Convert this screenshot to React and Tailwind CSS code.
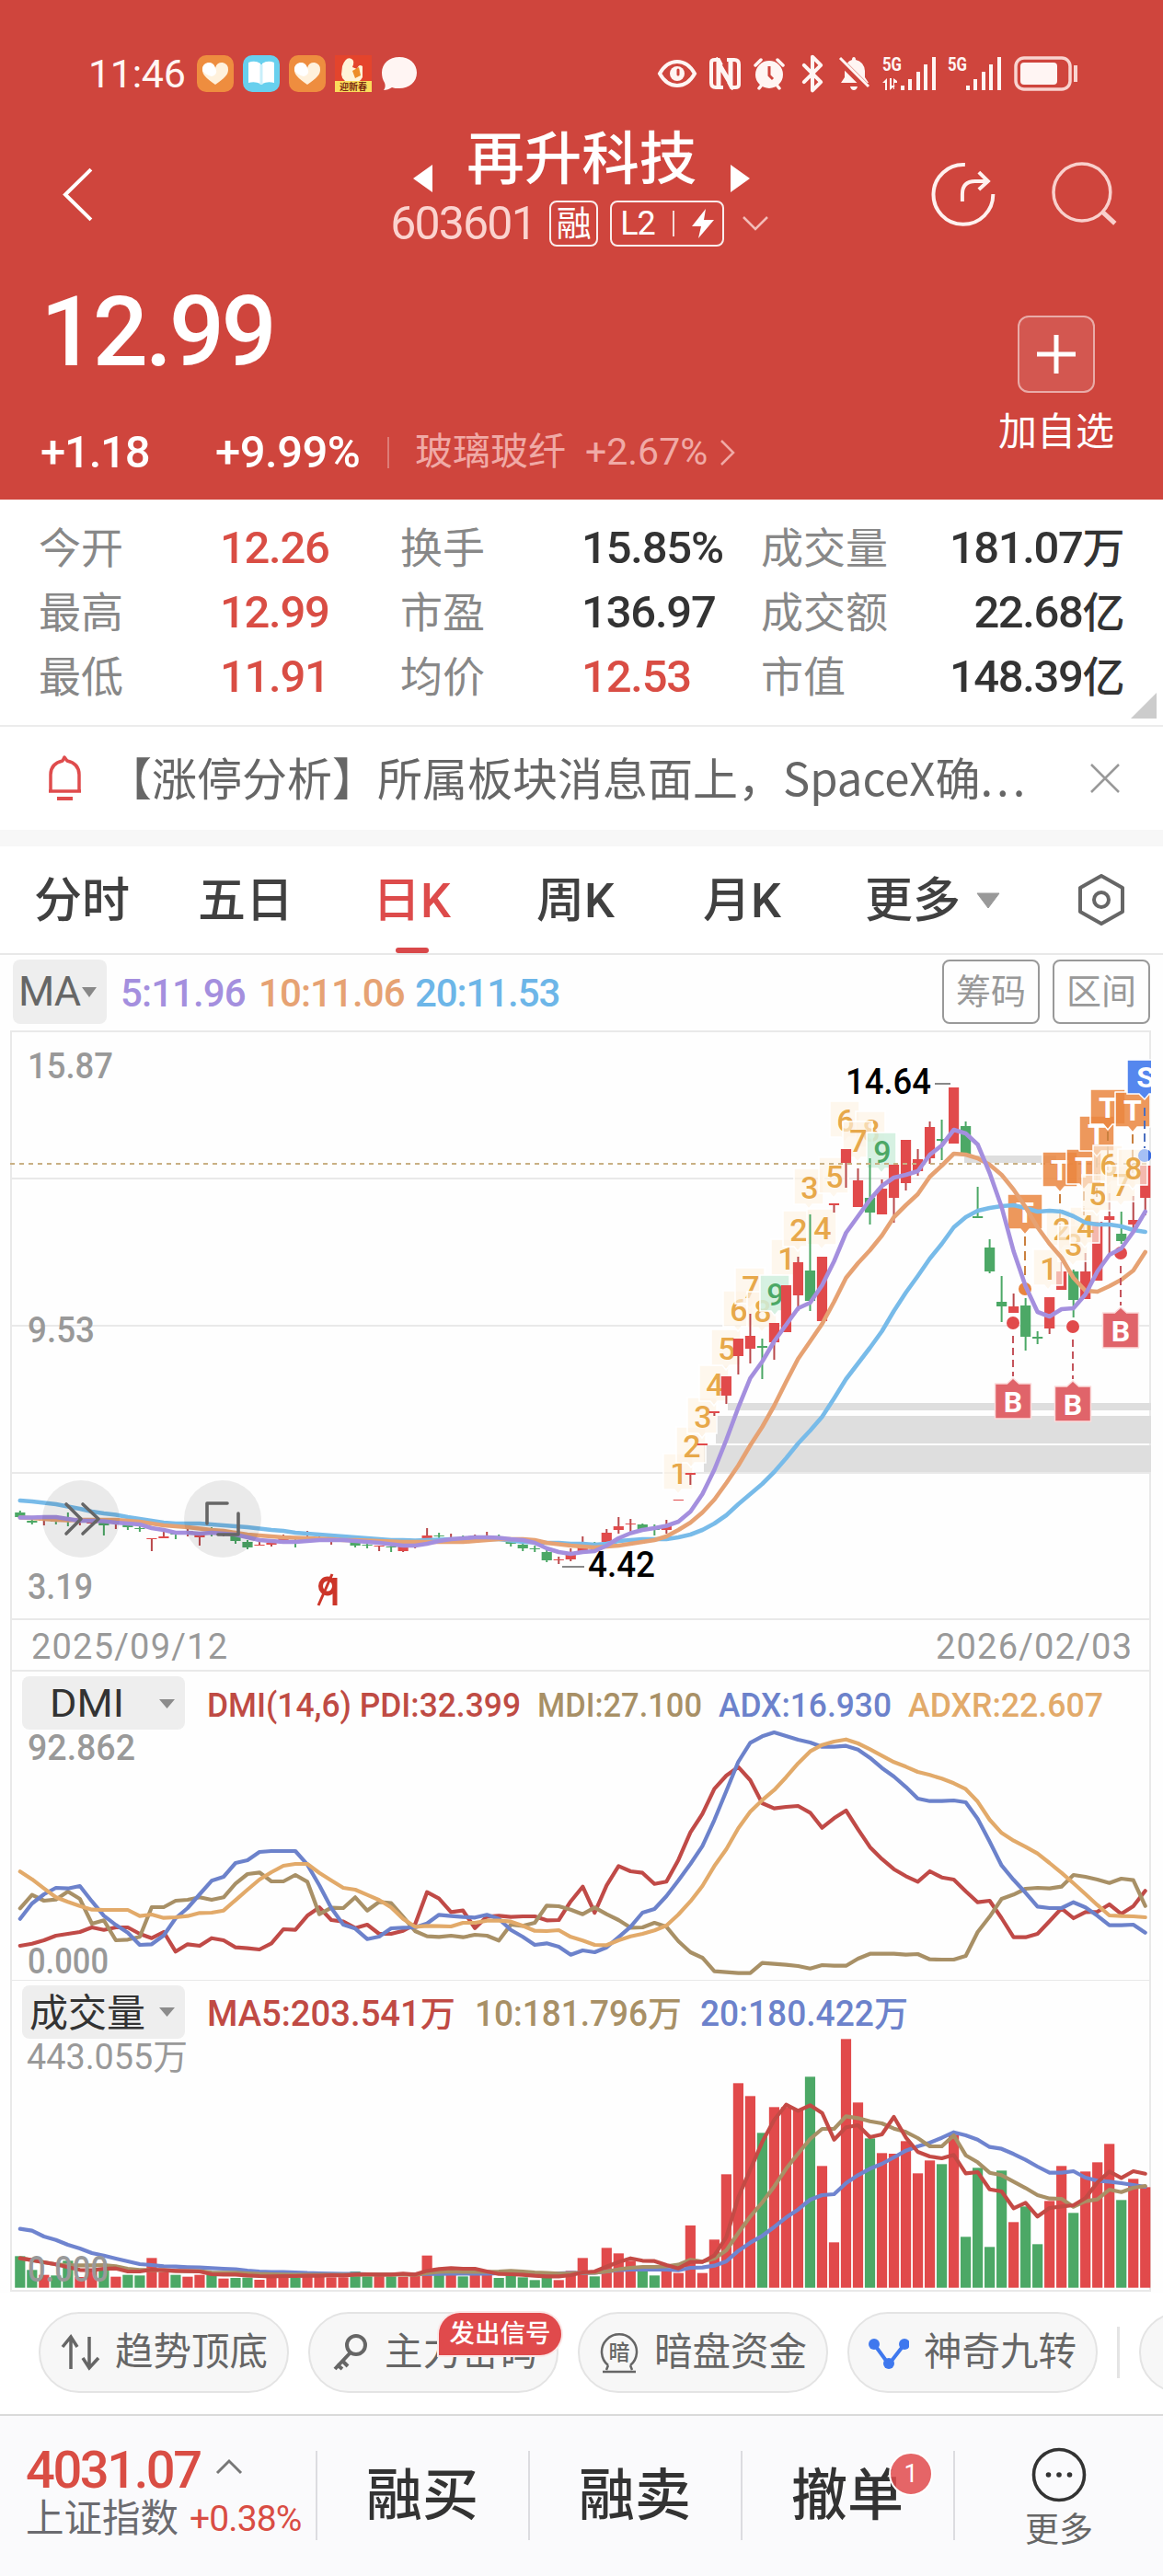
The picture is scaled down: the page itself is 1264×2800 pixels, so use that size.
import React from 'react';
import { Bluetooth } from 'lucide-react';

// ── Chart data ────────────────────────────────────────────────────────────────
const STEP = 13.01;
const px = i => 21.8 + i * STEP;

// [color, body top, body bottom, high, low]
const CANDLES = [
  ['g', 524, 529, 522, 531], ['g', 533, 535, 530, 537], ['r', 531, 533, 530, 538], ['g', 532, 534, 530, 537],
  ['g', 531, 533, 524, 539], ['r', 532, 534, 530, 538], ['r', 534, 536, 532, 539], ['g', 534, 538, 532, 549],
  ['r', 534, 536, 532, 542], ['g', 536, 540, 534, 543], ['g', 541, 542, 538, 545], ['r', 552, 553, 552, 566],
  ['r', 550, 552, 545, 552], ['g', 547, 548, 545, 553], ['r', 544, 546, 540, 550], ['r', 548, 551, 545, 560],
  ['g', 545, 547, 540, 550], ['r', 546, 549, 544, 550], ['g', 549, 555, 547, 558], ['g', 556, 562, 554, 564],
  ['r', 559, 560, 556, 560], ['r', 557, 559, 554, 561], ['r', 552, 554, 548, 557], ['g', 554, 556, 552, 562],
  ['r', 552, 554, 544, 556], ['r', 553, 554, 549, 556], ['r', 554, 555, 552, 559], ['r', 552, 554, 551, 556],
  ['g', 556, 560, 554, 562], ['g', 559, 560, 557, 563], ['r', 560, 561, 560, 566], ['g', 561, 562, 558, 567],
  ['r', 561, 566, 559, 567], ['r', 558, 560, 556, 563], ['r', 549, 555, 541, 559], ['g', 549, 550, 546, 554],
  ['r', 551, 553, 547, 554], ['g', 551, 553, 549, 555], ['r', 550, 552, 548, 554], ['r', 550, 552, 545, 553],
  ['g', 550, 552, 548, 555], ['g', 556, 558, 553, 561], ['g', 559, 563, 557, 566], ['g', 563, 564, 560, 567],
  ['g', 567, 576, 565, 578], ['r', 575, 576, 572, 580], ['r', 568, 575, 563, 577], ['r', 560, 566, 550, 568],
  ['g', 559, 561, 556, 564], ['r', 546, 556, 542, 557], ['r', 539, 543, 529, 547], ['r', 536, 537, 531, 545],
  ['g', 537, 542, 536, 543], ['g', 542, 543, 537, 549], ['r', 539, 543, 532, 547], ['r', 510, 511, 510, 511],
  ['r', 481, 483, 481, 494], ['r', 449, 451, 449, 451], ['r', 414, 416, 414, 419], ['r', 376, 397, 376, 406],
  ['r', 335, 354, 335, 374], ['r', 332, 346, 308, 362], ['g', 343, 345, 335, 379], ['r', 318, 339, 318, 358],
  ['r', 277, 328, 277, 328], ['r', 252, 288, 246, 305], ['g', 261, 294, 200, 305], ['r', 246, 316, 246, 316],
  ['r', 188, 190, 188, 198], ['r', 129, 144, 129, 171], ['r', 163, 192, 150, 192], ['g', 182, 198, 139, 211],
  ['r', 172, 200, 162, 200], ['r', 146, 182, 146, 209], ['r', 119, 166, 119, 174], ['r', 140, 153, 129, 158],
  ['r', 105, 139, 99, 145], ['g', 118, 120, 97, 141], ['r', 62, 123, 62, 123], ['g', 104, 135, 99, 135],
  ['g', 202, 204, 170, 204], ['g', 236, 262, 227, 264], ['g', 295, 300, 267, 317], ['r', 300, 307, 286, 307],
  ['g', 299, 333, 291, 348], ['g', 333, 335, 327, 341], ['r', 290, 324, 290, 330], ['r', 262, 282, 243, 282],
  ['g', 262, 293, 260, 312], ['r', 262, 292, 242, 292], ['r', 208, 272, 208, 272], ['r', 202, 206, 177, 244],
  ['g', 221, 229, 197, 232], ['r', 206, 211, 180, 220], ['r', 147, 182, 147, 201],
];

const MA5 = [
  529.5, 529.5, 529, 529, 531, 533, 533, 533.5, 535, 536, 537, 541, 543, 546, 546, 547, 546, 547, 548, 551,
  554, 555, 556, 556, 555, 554, 554, 554, 555, 556, 557, 558.5, 560, 560, 558, 555, 553, 552, 551, 551,
  551.5, 553, 554, 557, 563, 567, 569, 567, 566, 560, 552, 546.5, 543, 541, 538.5, 534, 523, 504, 477.5, 445,
  410, 378, 360, 338, 320, 302, 296, 277, 251, 220, 202, 184, 169, 160, 157, 153, 135, 125, 108, 112,
  124, 155, 192, 240, 278, 306, 311, 303, 302, 287, 262, 244, 237, 219, 197,
];
const MA10 = [
  529.5, 530, 531, 532, 532.5, 532, 532, 532, 532, 533, 534, 536, 538, 539, 540, 541.5, 543, 544, 546, 548,
  549, 550, 551, 551.5, 552, 552.5, 553, 554, 554, 554.5, 555, 555.5, 556, 556, 556, 556, 556, 556, 555, 554,
  553, 553, 553, 554, 557, 558.5, 560, 561, 562, 561, 560, 558, 556, 554, 550, 543, 535, 524, 510, 492,
  473, 451, 431, 408, 382, 357, 338, 319, 295, 269, 253, 239, 223, 203, 190, 178, 159, 147, 134, 135,
  139, 146, 157, 173, 192, 214, 232, 247, 269, 283, 284, 278, 271, 261, 241,
];
const MA20 = [
  511, 512, 513.5, 515, 517.5, 520, 523, 525, 526.5, 529, 531, 533, 535, 536, 536, 536, 537, 538, 539, 540,
  541.5, 543, 544, 546, 547, 548, 549, 550, 551, 552, 553, 554, 554, 554.5, 554, 553.5, 553, 553, 553, 553,
  553, 554.5, 556, 556.5, 557, 557, 558, 558, 559, 558, 555, 554, 553, 553, 553, 551, 548, 543, 536, 527,
  515, 504, 493, 480, 465, 449, 435, 420, 400, 379, 362, 345, 327, 305, 285, 267, 248, 232, 214, 203,
  196, 193, 191, 190, 193, 197, 196, 197, 202, 209, 211, 211, 213, 217, 219,
];

// The lower panels keep their samples in thirds of a pixel
const PDI = [
  945, 938, 927, 912, 906, 900, 885, 893, 885, 885, 906, 920, 900, 964, 940, 945, 920, 927, 950, 953,
  957, 937, 891, 893, 847, 820, 861, 866, 887, 876, 906, 906, 896, 875, 770, 791, 835, 830, 887, 850,
  847, 851, 849, 849, 862, 861, 800, 752, 837, 748, 685, 702, 707, 743, 736, 665, 575, 515, 433, 390,
  362, 405, 480, 497, 492, 489, 511, 560, 529, 504, 565, 623, 662, 695, 718, 736, 702, 722, 729, 767,
  803, 798, 855, 917, 917, 906, 865, 823, 855, 835, 834, 810, 841, 816, 766,
];
const MDI = [
  823, 779, 798, 794, 768, 792, 873, 862, 927, 925, 916, 819, 819, 798, 795, 787, 795, 787, 742, 711,
  706, 735, 735, 714, 736, 842, 821, 822, 787, 830, 802, 806, 850, 897, 914, 916, 912, 917, 909, 912,
  928, 876, 880, 870, 814, 816, 827, 842, 820, 842, 861, 886, 885, 870, 883, 930, 966, 984, 1028, 1031,
  1034, 1034, 1001, 1004, 1007, 1011, 1019, 1008, 1010, 1010, 987, 971, 971, 971, 974, 972, 989, 990, 990, 978,
  900, 850, 792, 778, 759, 756, 758, 752, 714, 720, 729, 740, 726, 731, 815,
];
const ADX = [
  857, 807, 777, 756, 758, 750, 800, 847, 877, 902, 942, 940, 911, 855, 822, 777, 733, 720, 675, 666,
  639, 636, 636, 636, 680, 748, 822, 876, 889, 923, 915, 888, 886, 885, 872, 844, 848, 851, 853, 844,
  857, 893, 916, 942, 937, 948, 974, 960, 966, 950, 917, 883, 837, 825, 783, 732, 678, 620, 535, 440,
  345, 283, 262, 249, 261, 273, 282, 296, 296, 293, 305, 332, 365, 393, 427, 465, 473, 473, 471, 477,
  531, 605, 683, 730, 772, 817, 822, 822, 803, 820, 847, 878, 878, 876, 902,
];
const ADXR = [
  703, 728, 758, 787, 802, 815, 827, 828, 828, 828, 848, 843, 854, 852, 848, 838, 837, 830, 796, 762,
  729, 705, 684, 678, 678, 707, 732, 756, 762, 779, 796, 820, 857, 883, 880, 881, 882, 870, 870, 863,
  863, 866, 880, 896, 897, 894, 916, 928, 942, 943, 927, 914, 906, 895, 879, 843, 800, 750, 685, 630,
  562, 508, 470, 437, 395, 350, 311, 290, 279, 272, 285, 304, 325, 346, 361, 378, 388, 400, 415, 434,
  475, 534, 577, 602, 622, 644, 675, 707, 741, 776, 812, 846, 848, 849, 852,
];

const VOLUME = [
  907, 952, 968, 970, 922, 975, 950, 948, 974, 968, 970, 913, 960, 968, 974, 968, 968, 980, 978, 977,
  984, 978, 975, 977, 975, 975, 976, 976, 957, 973, 970, 973, 974, 972, 905, 965, 965, 973, 960, 965,
  978, 970, 976, 985, 975, 985, 955, 913, 973, 880, 898, 922, 957, 970, 955, 962, 807, 962, 853, 640,
  343, 385, 505, 421, 421, 432, 322, 613, 862, 199, 406, 523, 571, 573, 532, 637, 595, 607, 511, 844,
  619, 877, 628, 796, 745, 868, 727, 613, 766, 631, 601, 541, 724, 655, 682,
];
const VMA5 = [
  914, 920, 927, 934, 943, 952, 953, 948, 947, 957, 957, 951, 953, 955, 956, 957, 966, 967, 967, 970,
  972, 973, 972, 972, 971, 971, 969, 970, 967, 966, 967, 967, 964, 967, 955, 949, 946, 948, 948, 957,
  965, 966, 968, 971, 973, 973, 969, 960, 957, 941, 926, 914, 922, 923, 936, 947, 926, 926, 905, 845,
  715, 625, 535, 463, 413, 433, 415, 440, 527, 487, 480, 519, 510, 453, 520, 567, 582, 588, 577, 637,
  633, 689, 696, 751, 733, 778, 750, 745, 741, 718, 667, 631, 652, 630, 638,
];
const VMA10 = [
  914, 920, 927, 934, 936, 937, 937, 936, 940, 948, 952, 952, 953, 955, 956, 956, 960, 961, 961, 963,
  965, 966, 967, 968, 968, 968, 968, 968, 968, 967, 967, 967, 967, 968, 962, 958, 957, 958, 958, 958,
  957, 955, 957, 960, 962, 964, 963, 961, 961, 957, 950, 945, 942, 942, 940, 935, 919, 925, 915, 888,
  832, 778, 732, 680, 622, 573, 525, 492, 492, 451, 457, 467, 474, 491, 502, 522, 549, 549, 513, 578,
  601, 635, 643, 664, 685, 708, 719, 720, 746, 728, 722, 690, 698, 684, 678,
];
const VMA20 = [
  818, 824, 843, 854, 870, 882, 897, 905, 915, 924, 933, 936, 940, 941, 943, 944, 946, 948, 950, 954,
  957, 959, 959, 960, 962, 963, 964, 965, 965, 966, 966, 966, 966, 966, 965, 965, 964, 964, 964, 964,
  963, 963, 963, 963, 963, 963, 962, 962, 961, 957, 952, 951, 951, 951, 951, 953, 945, 944, 938, 924,
  890, 863, 841, 812, 781, 755, 723, 708, 705, 669, 643, 622, 606, 585, 563, 549, 537, 521, 503, 513,
  527, 551, 557, 574, 593, 615, 635, 635, 630, 651, 661, 664, 669, 675, 681,
];

// [digit, center x, top y]
const COUNTS = [
  ['1', 737, 460], ['2', 751, 431], ['3', 763, 399], ['4', 776, 364], ['5', 789, 325], ['6', 802, 283],
  ['7', 815, 258], ['8', 828, 284], ['1', 854, 227], ['9', 842, 266], ['2', 867, 196], ['4', 893, 194],
  ['3', 879, 150], ['5', 906, 138], ['6', 918, 77], ['8', 946, 88], ['7', 932, 99], ['9', 958, 111],
];
const LATE_COUNTS = [
  ['1', 1139, 238], ['2', 1153, 195], ['3', 1166, 212], ['4', 1179, 192], ['5', 1192, 157],
  ['6', 1204, 125], ['7', 1218, 147], ['8', 1231, 129],
];
const T_TAGS = [[1114, 178], [1152, 132], [1178, 129], [1192, 93], [1204, 64], [1231, 67]];
const B_TAGS = [[1101, 318, 384], [1166, 322, 387], [1218, 242, 307]];

const RED = '#e14a4b';
const GREEN = '#4ca866';

const points = (ys, k = 1, dy = 0) => ys.map((y, i) => `${px(i).toFixed(1)},${(y * k + dy).toFixed(1)}`).join(' ');

function Line({ data, color, k, dy, w = 4.6 }) {
  return <polyline points={points(data, k, dy)} fill="none" stroke={color} strokeWidth={w} strokeLinecap="round" strokeLinejoin="round" />;
}

function Label({ x, y, w, size = 38, color = '#999', weight = 400, adjust = 'spacingAndGlyphs', children }) {
  return (
    <text x={x} y={y} fontSize={size} fill={color} fontWeight={weight} textLength={w} lengthAdjust={adjust}>
      {children}
    </text>
  );
}

function Count({ d, x, y }) {
  const nine = d === '9';
  return (
    <g>
      <path
        d={`M${x - 16} ${y}h32v39h-12l-4 5-4-5h-12z`}
        fill={nine ? '#cfeedd' : '#fdf2e4'}
        fillOpacity={nine ? 0.85 : 0.65}
        stroke="#fff"
        strokeWidth="1.5"
      />
      <text x={x + 1} y={y + 33} textAnchor="middle" fontSize="34" fontWeight="500" fill={nine ? GREEN : '#e7a84a'}>{d}</text>
    </g>
  );
}

function TagText({ x, y, children }) {
  return <text x={x} y={y} textAnchor="middle" fontSize="32" fontWeight="700" fill="#fff">{children}</text>;
}

// ── Candlestick panel ─────────────────────────────────────────────────────────
function KChart() {
  return (
    <svg className="block w-full h-[696px] font-[Roboto]" viewBox="0 0 1264 696">
      <clipPath id="plot"><rect x="0" y="0" width="1251" height="696" /></clipPath>
      <path d="M11 1H1251M11 161H1251M11 321H1251M11 481H1251M11 640H1251" stroke="#e9e9e9" strokeWidth="2" />
      <path d="M12 0V696M1250 0V696" stroke="#e9e9e9" strokeWidth="2" />

      {/* price gaps */}
      <g fill="#dedede">
        <rect x="1048" y="136" width="100" height="8" />
        <rect x="791" y="405" width="460" height="8" />
        <rect x="778" y="419" width="473" height="30" />
        <rect x="765" y="451" width="486" height="29" />
      </g>

      {COUNTS.map(([d, x, y]) => <Count key={x} d={d} x={x} y={y} />)}

      {CANDLES.map(([c, top, bottom, high, low], i) => (
        <g key={i} fill={c === 'r' ? RED : GREEN}>
          <rect x={px(i) - 1} y={high} width="2" height={low - high} fill={c === 'r' ? '#b9484b' : '#4ca866'} />
          <rect x={px(i) - 5.6} y={top} width="11.2" height={bottom - top} />
        </g>
      ))}

      <path d="M11 145H1251" stroke="#c9b084" strokeWidth="1.8" strokeDasharray="5 5" />

      {/* trade marks */}
      {T_TAGS.map(([x, y]) => (
        <g key={x}>
          <path d={`M${x} ${y + 46}v44`} stroke="#c9803f" strokeWidth="2" strokeDasharray="10 6" />
          <path
            d={`M${x - 19} ${y}h38v38h-14l-5 6-5-6h-14z`}
            fill="#ea8640"
            fillOpacity="0.85"
            stroke="#fff"
            strokeWidth="1.5"
            strokeLinejoin="round"
          />
          <TagText x={x} y={y + 31}>T</TagText>
        </g>
      ))}
      <circle cx="1114" cy="281" r="7" fill="#e8843e" />
      {LATE_COUNTS.map(([d, x, y]) => <Count key={x} d={d} x={x} y={y} />)}

      <Line data={MA20} color="#78bbe9" />
      <Line data={MA10} color="#e6a273" />

      {B_TAGS.map(([x, dot, y]) => (
        <g key={x}>
          <circle cx={x} cy={dot} r="7" fill={RED} />
          <path d={`M${x} ${dot + 14}V${y - 8}`} stroke="#c4545c" strokeWidth="2" strokeDasharray="8 5" />
          <path
            d={`M${x - 19.5} ${y}h13l6.5-6 6.5 6h13v38h-39z`}
            fill="#e0646a"
            stroke="#fbdcdc"
            strokeWidth="1.5"
            strokeLinejoin="round"
          />
          <TagText x={x} y={y + 31}>B</TagText>
        </g>
      ))}

      <g clipPath="url(#plot)">
        <path d="M1225 32H1264V69H1249L1244 75L1238 69H1225Z" fill="#5587ee" stroke="#fff" strokeWidth="1.5" />
        <TagText x={1245} y={62}>S</TagText>
        <path d="M1244 84V128" stroke="#4a6fc0" strokeWidth="2" strokeDasharray="9 5" />
        <circle cx="1244" cy="136" r="7" fill="#a5bff5" />
        <path d="M1248 130a7 7 0 0 1 0 12z" fill="#3d6de0" />
      </g>

      <Line data={MA5} color="#a48fde" />

      {/* floating round buttons */}
      <circle cx="88" cy="531" r="42" opacity="0.08" />
      <circle cx="242" cy="531" r="42" opacity="0.08" />
      <g fill="none" stroke="#666" strokeWidth="3.6" strokeLinecap="round" strokeLinejoin="round">
        <path d="M72 515L88 531L72 547M90 515L107 531L90 547" />
        <path d="M225 536V514H247M237 548H259V525" />
      </g>

      <Label x={30} y={52} w={93} weight={500}>15.87</Label>
      <Label x={30} y={339} w={73} weight={500}>9.53</Label>
      <Label x={30} y={618} w={71} weight={500}>3.19</Label>
      <Label x={34} y={683} w={213} adjust="spacing">2025/09/12</Label>
      <Label x={1017} y={683} w={213} adjust="spacing">2026/02/03</Label>
      <path d="M1016 58h17M611 583h24" stroke="#888" strokeWidth="2" />
      <Label x={919} y={69} w={93} size={39} color="#000" weight={500}>14.64</Label>
      <Label x={639} y={594} w={73} size={39} color="#000" weight={500}>4.42</Label>

      <g fill="none" stroke="#cc3529" strokeWidth="5">
        <ellipse cx="356" cy="604" rx="7.5" ry="8" />
        <path d="M364 595V625" />
        <path d="M346 625L361 591" strokeWidth="3" />
      </g>
    </svg>
  );
}

// ── Indicator panels ──────────────────────────────────────────────────────────
function DmiPanel() {
  return (
    <svg className="block w-full h-[336px] overflow-visible font-[Roboto]" viewBox="0 0 1264 336">
      <path d="M11 0H1251M12 0V336M1250 0V336" stroke="#e9e9e9" strokeWidth="2" />
      <rect x="24" y="6" width="177" height="58" rx="8" fill="#eee" />
      <Label x={54} y={50} w={81} size={43} color="#333">DMI</Label>
      <path d="M173 31h17l-8.500 10z" fill="#8c8c8c" />
      <Label x={225} y={50} w={341} size={36} weight={500} color="#bf4b44">DMI(14,6) PDI:32.399</Label>
      <Label x={584} y={50} w={179} size={36} weight={500} color="#a89066">MDI:27.100</Label>
      <Label x={781} y={50} w={188} size={36} weight={500} color="#6c82cb">ADX:16.930</Label>
      <Label x={987} y={50} w={212} size={36} weight={500} color="#e2aa6a">ADXR:22.607</Label>
      <Line data={PDI} color="#c04a47" k={1 / 3} dy={-16} w={4.2} />
      <Line data={MDI} color="#a89066" k={1 / 3} dy={-16} w={4.2} />
      <Line data={ADX} color="#6c82cb" k={1 / 3} dy={-16} w={4.2} />
      <Line data={ADXR} color="#e2aa6a" k={1 / 3} dy={-16} w={4.2} />
      <Label x={30} y={97} w={117} weight={500}>92.862</Label>
      <Label x={30} y={329} w={88} weight={500}>0.000</Label>
    </svg>
  );
}

function VolumePanel() {
  return (
    <svg className="block w-full h-[340px] font-[Roboto,'Noto_Sans_CJK_SC',sans-serif]" viewBox="0 0 1264 340">
      <path d="M11 0H1251M12 0V338M1250 0V338M11 338H1251" stroke="#e9e9e9" strokeWidth="2" />
      <rect x="24" y="6" width="177" height="58" rx="8" fill="#eee" />
      <Label x={32} y={51} w={126} size={42} color="#333">成交量</Label>
      <path d="M173 30h17l-8.500 10z" fill="#8c8c8c" />
      <Label x={225} y={50} w={270} size={38} weight={500} color="#c04a44">MA5:203.541万</Label>
      <Label x={516} y={50} w={225} size={38} weight={500} color="#a89066">10:181.796万</Label>
      <Label x={761} y={50} w={226} size={38} weight={500} color="#6c82cb">20:180.422万</Label>
      {VOLUME.map((v, i) => (
        <rect key={i} x={px(i) - 5.6} y={v / 3 - 2} width="11.2" height={(1010 - v) / 3} fill={CANDLES[i][0] === 'r' ? RED : GREEN} />
      ))}
      <Line data={VMA20} color="#6f84cf" k={1 / 3} dy={-2} w={4.2} />
      <Line data={VMA10} color="#a89066" k={1 / 3} dy={-2} w={4.2} />
      <Line data={VMA5} color="#c44a45" k={1 / 3} dy={-2} w={4.2} />
      <Label x={29} y={97} w={175}>443.055万</Label>
      <Label x={30} y={328} w={88} weight={500}>0.000</Label>
    </svg>
  );
}

// ── Status bar ────────────────────────────────────────────────────────────────
function HeartApp() {
  return (
    <svg className="w-10 h-10" viewBox="0 0 40 40">
      <rect width="40" height="40" rx="10" fill="#ee8d3f" />
      <path d="M20 32C10 25 6 21 6 16a7 7 0 0 1 14-2 7 7 0 0 1 14 2c0 5-4 9-14 16z" fill="#fff1dc" />
      <path d="M20 14c3 5 0 8-4 9-5-1-8-4-10-6a7 7 0 0 1 14-3z" fill="#fff" />
    </svg>
  );
}

function Signal({ arrows }) {
  return (
    <svg className="w-[60px] h-[38px] overflow-visible" viewBox="0 0 60 38" fill="#fff5f3">
      <text x="0" y="16" fontSize="20" fontWeight="700" textLength="21" lengthAdjust="spacingAndGlyphs">5G</text>
      {arrows && <path d="M0 29l5-5v13H3v-8zM8 24h2v8l4 0-6 5z" />}
      {arrows && <path d="M13 29h3v-2l-4-3v12h1z" />}
      <path d="M20 32h4v5h-4zM28 25h4v12h-4zM37 17h4v20h-4zM45 9h4v28h-4zM54 1h4v36h-4z" />
    </svg>
  );
}

function StatusBar() {
  return (
    <div className="flex items-center h-[160px] pl-[96px] pr-[91px] text-[#fff5f3]">
      <span className="text-[43px] w-[118px] tracking-[-0.3px]">11:46</span>
      <div className="flex items-center gap-[10px]">
        <HeartApp />
        <svg className="w-10 h-10" viewBox="0 0 40 40">
          <rect width="40" height="40" rx="10" fill="#68d0ee" />
          <path d="M6 8q7-3 13 1v22q-6-3-13-1zM21 9q6-4 13-1v22q-7-2-13 1z" fill="#fff" />
          <path d="M20 10v22" stroke="#c8effa" strokeWidth="3" />
        </svg>
        <HeartApp />
        <svg className="w-10 h-10" viewBox="0 0 40 40">
          <rect width="40" height="40" fill="#e4442c" />
          <path d="M8 12q4-11 10-8 4 2 1 9l5 2q2-6 6-3v12q-3 6-10 6-12 0-13-9z" fill="#fff3d8" />
          <path d="M19 17l7-4 2 9-6 3z" fill="#ed8d28" />
          <path d="M0 28h40v12H0z" fill="#fbdc5b" />
          <text x="5" y="37.500" fontSize="10" fontWeight="700" fill="#7a2a12">迎新春</text>
        </svg>
        <svg className="w-10 h-10" viewBox="0 0 40 40" fill="#fff5f3">
          <path d="M20 2c11 0 19 7 19 17s-8 17-19 17c-3 0-6 0-8-1-3 2-6 3-9 3 2-3 2-5 1-8C2 27 1 23 1 19 1 9 9 2 20 2z" />
        </svg>
      </div>
      <div className="flex items-center ml-auto">
        <svg className="w-11 h-8" viewBox="0 0 44 32" fill="none" stroke="#fff5f3" strokeWidth="4">
          <path d="M3 16C8 7 14 3 22 3s14 4 19 13c-5 9-11 13-19 13S8 25 3 16z" />
          <circle cx="22" cy="16" r="8" fill="#fff5f3" stroke="none" />
          <path d="M23 12v5" stroke="#cf453d" strokeWidth="3" strokeLinecap="round" />
        </svg>
        <svg className="w-9 h-9 ml-3" viewBox="0 0 36 36" fill="none" stroke="#fff5f3">
          <path d="M20 3h8q5 0 5 5v22q0 3-4 3M16 33H8q-5 0-5-5V6q0-3 4-3" strokeWidth="4" />
          <path d="M11 31V7l13 22V5" strokeWidth="5" />
          <path d="M7 3h4l3 6M29 33h-4l-3-6" strokeWidth="4" />
        </svg>
        <svg className="w-9 h-9 ml-3" viewBox="0 0 36 36" fill="#fff5f3">
          <circle cx="18" cy="19" r="15" />
          <path d="M3 9L9 3M33 9l-6-6M7 34l4-5M29 34l-4-5" stroke="#fff5f3" strokeWidth="3.500" strokeLinecap="round" />
          <path d="M18 10v10l4 4" stroke="#cf453d" strokeWidth="3" fill="none" />
        </svg>
        <Bluetooth className="w-11 h-11 ml-[7px]" strokeWidth={2.2} />
        <svg className="w-9 h-10 ml-[6px]" viewBox="0 0 36 40" fill="#fff5f3">
          <path d="M17 2q2 0 2 3 9 2 10 12v7l4 6H3l4-6v-7Q8 7 15 5q0-3 2-3zM13 34h8q-1 4-4 4t-4-4z" />
          <path d="M1 5l31 31" stroke="#cf453d" strokeWidth="8" />
          <path d="M2 3l31 31" stroke="#fff5f3" strokeWidth="3" />
        </svg>
        <div className="ml-[12px]"><Signal arrows /></div>
        <div className="ml-[11px]"><Signal /></div>
        <svg className="w-[71px] h-[38px] ml-[12px]" viewBox="0 0 71 38">
          <rect x="2" y="2" width="59" height="34" rx="9" fill="none" stroke="#f9d4d0" strokeWidth="3.500" />
          <rect x="7" y="7" width="40" height="24" rx="4" fill="#fff5f3" />
          <path d="M67 10v18" stroke="#f9d4d0" strokeWidth="4" />
        </svg>
      </div>
    </div>
  );
}

// ── Header ────────────────────────────────────────────────────────────────────
function TitleBar() {
  return (
    <div className="flex h-[110px] pl-[67px] pr-[49px]">
      <svg className="w-[34px] h-[60px] mt-[22px]" viewBox="0 0 34 60" fill="none" stroke="#fff" strokeWidth="4">
        <path d="M32 2L4 29.500L32 57" />
      </svg>
      <div className="flex flex-col items-center w-[520px] ml-[272px] mr-[121px]">
        <div className="flex items-center justify-between w-[366px] h-[50px] mt-[-11px]">
          <svg className="w-[22px] h-[30px] mt-[40px]" viewBox="0 0 22 30"><path d="M21 0v30L0 15z" fill="#fff" /></svg>
          <h1 className="text-[62.5px] font-medium leading-[50px] text-white">再升科技</h1>
          <svg className="w-[22px] h-[30px] mt-[40px]" viewBox="0 0 22 30"><path d="M1 0v30l21-15z" fill="#fff" /></svg>
        </div>
        <div className="flex items-center h-[50px] mt-[19px] w-[416px]">
          <span className="w-[173px] text-[50px] leading-[50px] tracking-[-1.8px] text-[#fbd3cf]">603601</span>
          <span className="flex items-center justify-center w-[53px] h-[50px] rounded-lg border-2 border-white/90 text-[38px] leading-none text-white">融</span>
          <div className="flex items-center justify-between w-[124px] h-[50px] ml-[13px] px-[9px] rounded-lg border-2 border-white/90 text-[36px] text-white">
            <span className="tracking-[-1px]">L2</span>
            <span className="w-[2px] h-7 bg-white/80" />
            <svg className="w-6 h-8" viewBox="0 0 24 32" fill="#fff"><path d="M15 0L0 19h10L7 32 24 12H13z" /></svg>
          </div>
          <svg className="w-[30px] h-[18px] ml-[19px]" viewBox="0 0 30 18" fill="none" stroke="#f3bcb8" strokeWidth="2.500">
            <path d="M2 2l13 13L28 2" />
          </svg>
        </div>
      </div>
      <svg className="w-[70px] h-[72px] mt-[15px]" viewBox="0 0 70 72" fill="none" stroke="#fff1ef" strokeWidth="4">
        <path d="M37 4A32.500 32.500 0 1 0 67.500 36" />
        <path d="M34 44V36q0-14 14-14h13M52 12l10 10-10 9" />
      </svg>
      <svg className="w-[72px] h-[72px] ml-[61px] mt-[15px]" viewBox="0 0 72 72" fill="none" stroke="#f9d0cc" strokeWidth="3.500">
        <circle cx="33" cy="34" r="31" />
        <path d="M56 56l13 12" strokeWidth="5" />
      </svg>
    </div>
  );
}

function Header() {
  return (
    <header className="h-[543px] bg-[#cf453d] text-white">
      <StatusBar />
      <TitleBar />
      <div className="flex justify-between h-[273px] pl-[44px] pr-[52px]">
        <div>
          <div className="h-[142px] pt-[41px] text-[106px] font-medium leading-[100px] tracking-[-3.4px]">12.99</div>
          <div className="flex items-center h-[50px] mt-[55px] text-[49px] font-medium">
            <span className="w-[190px] tracking-[-1.2px]">+1.18</span>
            <span className="w-[187px] tracking-[-0.5px]">+9.99%</span>
            <span className="w-[2px] h-[34px] bg-white/30" />
            <span className="w-[185px] ml-[28px] text-[41px] font-normal text-[#f0aaa6]">玻璃玻纤</span>
            <span className="w-[146px] text-[41px] font-normal text-[#f0aaa6]">+2.67%</span>
            <svg className="w-[18px] h-[30px]" viewBox="0 0 18 30" fill="none" stroke="#f0aaa6" strokeWidth="2.500"><path d="M2 2l13 13L2 28" /></svg>
          </div>
        </div>
        <div className="flex flex-col items-center w-[128px] pt-[73px]">
          <div className="flex items-center justify-center w-[84px] h-[84px] rounded-xl border-2 border-white/50 bg-white/10">
            <svg className="w-[42px] h-[42px]" viewBox="0 0 42 42" stroke="#fff" strokeWidth="5"><path d="M21 0v42M0 21h42" /></svg>
          </div>
          <span className="mt-[16px] text-[42px] leading-[54px] whitespace-nowrap">加自选</span>
        </div>
      </div>
    </header>
  );
}

// ── Quote figures ─────────────────────────────────────────────────────────────
const STATS = [
  ['今开', '12.26', true, '换手', '15.85%', false, '成交量', '181.07', '万'],
  ['最高', '12.99', true, '市盈', '136.97', false, '成交额', '22.68', '亿'],
  ['最低', '11.91', true, '均价', '12.53', true, '市值', '148.39', '亿'],
];

function Stats() {
  return (
    <section className="relative h-[247px] pt-[18px] border-b-2 border-[#ececec] bg-white">
      {STATS.map(row => (
        <div key={row[0]} className="flex items-center h-[70px] pl-[42px] pr-[43px] text-[49px] leading-[70px] text-[#888]">
          <span className="w-[197px] text-[46px]">{row[0]}</span>
          <span className="w-[196px] font-medium tracking-[-1.3px] text-[#d94d44]">{row[1]}</span>
          <span className="w-[197px] text-[46px]">{row[3]}</span>
          <span className={`w-[195px] font-medium tracking-[-1.2px] whitespace-nowrap ${row[5] ? 'text-[#d94d44]' : 'text-[#333]'}`}>{row[4]}</span>
          <span className="text-[46px]">{row[6]}</span>
          <span className="ml-auto font-medium tracking-[-1.4px] text-[#333]">
            {row[7]}<span className="text-[46px]">{row[8]}</span>
          </span>
        </div>
      ))}
      <svg className="absolute right-[7px] bottom-[7px] w-[28px] h-[28px]" viewBox="0 0 28 28"><path d="M28 0v28H0z" fill="#ccc" /></svg>
    </section>
  );
}

function Notice() {
  return (
    <section className="flex items-center h-[112px] pl-[50px] pr-[47px] bg-white text-[#666]">
      <svg className="w-[41px] h-[50px]" viewBox="0 0 41 50" fill="none" stroke="#df4c4d" strokeWidth="3.500">
        <path d="M3 39h35M5 38V21q0-12 13-15l2-4 3 4q13 3 13 15v17" strokeLinejoin="round" />
        <path d="M12 47h17" strokeWidth="4" />
      </svg>
      <p className="w-[1040px] ml-[25px] mb-[4px] text-[49px] leading-[70px] whitespace-nowrap font-['Noto_Sans_CJK_SC',sans-serif]">
        【涨停分析】所属板块消息面上，SpaceX确<span className="tracking-[4px]">...</span>
      </p>
      <svg className="w-[32px] h-[32px] ml-auto" viewBox="0 0 32 32" stroke="#999" strokeWidth="2.500"><path d="M1 1l30 30M31 1L1 31" /></svg>
    </section>
  );
}

// ── Period tabs ───────────────────────────────────────────────────────────────
const TABS = [
  { label: '分时', cls: 'ml-[37px] w-[178px]' },
  { label: '五日', cls: 'w-[190px]' },
  { label: '日K', cls: 'w-[178px] text-[#dd4b4b]', active: true },
  { label: '周K', cls: 'w-[181px]' },
  { label: '月K', cls: 'w-[176px]' },
  { label: '更多', cls: 'w-[121px]' },
];

function Tabs() {
  return (
    <nav className="flex items-center h-[118px] border-b-2 border-[#e8e8e8] bg-white text-[52px] leading-[119px] font-medium text-[#404040]">
      {TABS.map(t => (
        <div key={t.label} className={`relative h-[116px] ${t.cls}`}>
          {t.label}
          {t.active && <span className="absolute left-[25px] bottom-0 w-9 h-[6px] rounded-full bg-[#d9484a]" />}
        </div>
      ))}
      <svg className="w-[26px] h-[18px] mt-[2px]" viewBox="0 0 26 18"><path d="M1 1h24L13 17z" fill="#999" stroke="#999" strokeLinejoin="round" /></svg>
      <svg className="w-[52px] h-[56px] ml-[84px]" viewBox="0 0 52 56" fill="none" stroke="#666" strokeWidth="4" strokeLinejoin="round">
        <path d="M26 2l23 13v26L26 54 3 41V15z" />
        <circle cx="26" cy="28" r="8" />
      </svg>
    </nav>
  );
}

function MaRow() {
  return (
    <div className="flex items-center h-[82px] pl-[14px] pr-[14px] pb-[2px] text-[42px] font-medium">
      <div className="flex items-center w-[102px] h-[70px] pl-[6px] rounded-lg bg-[#eee] text-[45px] font-normal text-[#666]">
        <span className="w-[69px] tracking-[-1px]">MA</span>
        <svg className="w-4 h-[11px]" viewBox="0 0 16 11"><path d="M0 0h16L8 11z" fill="#888" /></svg>
      </div>
      <span className="mt-[3px] ml-[15px] w-[150px] tracking-[-0.9px] text-[#a48fde]">5:11.96</span>
      <span className="mt-[3px] w-[170px] tracking-[-0.9px] text-[#e6a273]">10:11.06</span>
      <span className="mt-[3px] tracking-[-1.1px] text-[#6db6e8]">20:11.53</span>
      <span className="flex items-center justify-center w-[106px] h-[70px] ml-auto rounded-lg border-2 border-[#999] text-[38px] font-normal text-[#999]">筹码</span>
      <span className="flex items-center justify-center w-[106px] h-[70px] ml-[14px] rounded-lg border-2 border-[#999] text-[38px] font-normal text-[#999]">区间</span>
    </div>
  );
}

// ── Indicator chips ───────────────────────────────────────────────────────────
function Chip({ label, children, badge }) {
  return (
    <div className="relative flex items-center w-[272px] h-[88px] pl-[21px] shrink-0 rounded-full border-2 border-[#e4e4e4] bg-[#f7f7f7] text-[41.5px] text-[#666]">
      <svg className="w-[44px] h-[48px] mr-[16px]" viewBox="0 0 44 48" fill="none" stroke="#666" strokeWidth="3.500">{children}</svg>
      <span className="whitespace-nowrap">{label}</span>
      {badge && (
        <span className="absolute right-[-7px] top-[-3px] flex items-center justify-center w-[137px] h-[50px] rounded-full rounded-bl-lg border-2 border-[#fbe9e9] bg-[#e04a4c] text-[27.5px] font-medium text-white">
          {badge}
        </span>
      )}
    </div>
  );
}

function Chips() {
  return (
    <div className="flex items-center gap-[21px] h-[132px] pl-[42px] pb-[2px] overflow-hidden bg-white">
      <Chip label="趋势顶底">
        <path d="M12 42V9M3 18L12 7l7 11M32 7v33M42 30L32 41l-7-11" />
      </Chip>
      <Chip label="主力密码" badge="发出信号">
        <circle cx="29" cy="16" r="10" strokeWidth="4" />
        <path d="M23 24L6 42M14 33l6 6M8 37l6 5" strokeWidth="4" />
      </Chip>
      <Chip label="暗盘资金">
        <path d="M10 38A19 19 0 1 1 34 38M4 45h36M10 38l-2 5M34 38l2 5" strokeWidth="2.500" />
        <text x="22" y="32" textAnchor="middle" fontSize="23" fontWeight="500" fill="#666" stroke="none">暗</text>
      </Chip>
      <Chip label="神奇九转">
        <path d="M6 15l16 22 17-22" stroke="#3f78ee" strokeWidth="4" />
        <g fill="#3f78ee" stroke="none">
          <circle cx="6" cy="15" r="6" />
          <circle cx="39" cy="15" r="6" />
          <circle cx="22" cy="36" r="6" />
        </g>
      </Chip>
      <span className="w-[3px] h-[56px] shrink-0 bg-[#e4e4e4]" />
      <Chip label="" />
    </div>
  );
}

// ── Bottom bar ────────────────────────────────────────────────────────────────
function Action({ label, count }) {
  return (
    <div className="flex items-center w-[231px] h-[97px]">
      <span className="w-[2px] h-full bg-[#dcdce0]" />
      <div className="relative ml-[53px] pt-[2px] text-[61px] leading-[97px] font-medium text-[#333]">
        {label}
        {count && (
          <span className="absolute left-[106px] top-[2px] flex items-center justify-center w-[48px] h-[48px] rounded-full border-2 border-white bg-[#e04a4c]/85 text-[27px] font-normal leading-none text-white">
            {count}
          </span>
        )}
      </div>
    </div>
  );
}

function BottomBar() {
  return (
    <footer className="flex h-[176px] pt-[38px] border-t-2 border-[#dadada] bg-[#fafafc]">
      <div className="w-[343px] pl-[28px] whitespace-nowrap">
        <div className="flex items-center h-[42px] text-[56px] font-medium text-[#d94d44]">
          <span className="w-[206px] tracking-[-2.4px]">4031.07</span>
          <svg className="w-[30px] h-[18px] mb-[8px]" viewBox="0 0 30 18" fill="none" stroke="#777" strokeWidth="3"><path d="M2 16L15 3l13 13" /></svg>
        </div>
        <div className="flex items-center h-[54px] mt-[5px] text-[41.5px] text-[#6b6b70]">
          <span className="w-[178px]">上证指数</span>
          <span className="text-[39px] tracking-[-0.9px] text-[#d94d44]">+0.38%</span>
        </div>
      </div>
      <Action label="融买" />
      <Action label="融卖" />
      <Action label="撤单" count="1" />
      <span className="w-[2px] h-[97px] bg-[#dcdce0]" />
      <div className="flex flex-col items-center w-[226px]">
        <svg className="w-[60px] h-[60px] mt-[-4px]" viewBox="0 0 60 60">
          <circle cx="30" cy="30" r="27.500" fill="none" stroke="#333" strokeWidth="3.600" />
          <g fill="#333"><circle cx="18.500" cy="30" r="2.800" /><circle cx="30" cy="30" r="2.800" /><circle cx="41.500" cy="30" r="2.800" /></g>
        </svg>
        <span className="mt-[8px] text-[37px] leading-[46px] text-[#666]">更多</span>
      </div>
    </footer>
  );
}

export default function App() {
  return (
    <div className="w-[1264px] h-[2800px] overflow-hidden bg-[#fefefe] font-[Roboto,'Noto_Sans_CJK_SC',sans-serif]">
      <Header />
      <Stats />
      <Notice />
      <div className="h-[18px] bg-[#f7f7f7]" />
      <Tabs />
      <MaRow />
      <KChart />
      <DmiPanel />
      <VolumePanel />
      <Chips />
      <BottomBar />
    </div>
  );
}
